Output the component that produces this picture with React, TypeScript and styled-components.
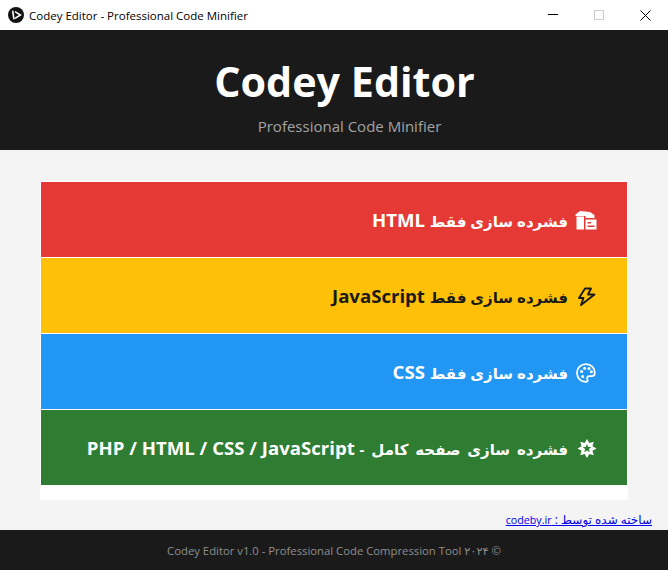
import React, { ReactNode } from 'react'
import styled, { createGlobalStyle } from 'styled-components'

const GlobalStyle = createGlobalStyle`
  html, body {
    margin: 0;
    padding: 0;
    height: 100%;
    overflow: hidden;
    background: #f4f4f4;
  }
  * {
    box-sizing: border-box;
  }
`

const Page = styled.div`
  width: 668px;
  height: 570px;
  display: flex;
  flex-direction: column;
  font-family: 'Open Sans', 'Noto Sans', 'DejaVu Sans', sans-serif;
`
const TitleBar = styled.div`
  height: 30px;
  background: #fff;
  display: flex;
  align-items: center;
  padding-left: 8px;
  font-size: 11.5px;
  color: #000;
`
const TitleText = styled.span`
  margin-left: 5px;
  flex: 1;
`
const WindowButton = styled.div`
  width: 46px;
  height: 30px;
  display: flex;
  align-items: center;
  justify-content: center;
`
const Header = styled.header`
  height: 120px;
  background: #1a1a1a;
  display: flex;
  flex-direction: column;
  align-items: center;
  padding: 24px 0 0 21px;
`
const Heading = styled.h1`
  margin: 0;
  font-size: 41.3px;
  line-height: 54px;
  font-weight: 700;
  color: #fff;
`
const SubHeading = styled.p`
  margin: 8px 0 0 10px;
  font-size: 15px;
  line-height: 20px;
  color: #a3a3a3;
`
const Main = styled.main`
  flex: 1;
  position: relative;
  padding: 31px 40px 0;
`
const Card = styled.div`
  width: 588px;
  height: 319px;
  background: #fff;
  padding: 1px 1px 0;
  display: flex;
  flex-direction: column;
  gap: 1px;
`
const ActionButton = styled.button<{ $bg: string; $fg: string }>`
  height: 75px;
  border: 0;
  padding: 0 30px 0 0;
  background: ${({ $bg }) => $bg};
  color: ${({ $fg }) => $fg};
  font-family: inherit;
  font-size: 18.6px;
  font-weight: 700;
  display: flex;
  align-items: center;
  justify-content: flex-end;
  gap: 7px;
  svg {
    margin-top: 3px;
  }
`
const Persian = styled.span<{ $wordGap: number }>`
  font-size: 15px;
  word-spacing: ${({ $wordGap }) => $wordGap}px;
`
const CreditLink = styled.a`
  position: absolute;
  right: 16px;
  bottom: 2px;
  font-size: 12px;
  line-height: 16px;
  color: #0000ee;
  text-decoration: underline;
`
const CreditDomain = styled.span`
  font-size: 10.7px;
`
const Footer = styled.footer`
  height: 40px;
  background: #1a1a1a;
  display: flex;
  align-items: center;
  justify-content: center;
  font-size: 11.3px;
  color: #8f8f8f;
`

const LogoIcon = () => (
  <svg width="16" height="16" viewBox="0 0 16 16">
    <circle cx="8" cy="8" r="8" fill="#111" />
    <path d="M4.6 3.6 6 12.4" stroke="#fff" strokeWidth="1.6" fill="none" />
    <path d="M7 4.6 12.4 8 7 11.4" stroke="#fff" strokeWidth="1.6" fill="none" />
  </svg>
)

const MinimizeIcon = () => (
  <svg width="10" height="10" viewBox="0 0 10 10">
    <path d="M0 4.5 H10" stroke="#000" />
  </svg>
)
const MaximizeIcon = () => (
  <svg width="10" height="10" viewBox="0 0 10 10">
    <rect x="0.5" y="0.5" width="9" height="9" fill="none" stroke="#ccc" />
  </svg>
)
const CloseIcon = () => (
  <svg width="11" height="11" viewBox="0 0 11 11">
    <path d="M0.5 0.5 10.5 10.5 M10.5 0.5 0.5 10.5" stroke="#000" />
  </svg>
)

const ShirtIcon = () => (
  <svg width="22" height="22" viewBox="5 5 22 22" fill="currentColor">
    <path d="M10 6 L20 7 L24.5 10 V13 L15.5 13 V11 H5.5 V9.5 Z" />
    <path d="M6.5 11.5 H14 V24.5 H6.5 Z" />
    <path fillRule="evenodd" d="M15.5 14.5 H26.5 V24.5 H15.5 Z M17.5 17 V18.5 H21 V17 Z M17.5 20.5 V22 H24.5 V20.5 Z" />
  </svg>
)
const BoltIcon = () => (
  <svg width="22" height="22" viewBox="5 5 22 22" fill="none" stroke="currentColor" strokeWidth="1.9" strokeLinejoin="round">
    <path d="M18.5 7.5 H15 L9 17 H13.5 L11 24 L24.5 13.5 H18 L21 7.5 Z" />
  </svg>
)
const PaletteIcon = () => (
  <svg width="22" height="22" viewBox="5 5 22 22" fill="none" stroke="currentColor" strokeWidth="1.8">
    <path d="M16 7.2 C10.8 7.2 7 11 7 16 C7 21 10.8 24.8 15.8 24.8 C17.6 24.8 18 23.4 17.4 22.4 C16.6 20.8 17.6 19.2 19.2 19.2 H21.8 C23.6 19.2 24.8 18 24.8 16 C24.8 11 21 7.2 16 7.2 Z" />
    <circle cx="11.6" cy="14.6" r="1.5" fill="currentColor" stroke="none" />
    <circle cx="14.6" cy="11.2" r="1.5" fill="currentColor" stroke="none" />
    <circle cx="19" cy="11.4" r="1.5" fill="currentColor" stroke="none" />
    <circle cx="21.4" cy="14.8" r="1.5" fill="currentColor" stroke="none" />
    <circle cx="12.6" cy="19.6" r="1.5" fill="currentColor" stroke="none" />
  </svg>
)
const BurstIcon = () => (
  <svg width="22" height="22" viewBox="5 5 22 22" fill="currentColor">
    <path
      fillRule="evenodd"
      d="M17 6 19.3 10 23.7 8.8 22.5 13.2 26.5 15.5 22.5 17.8 23.7 22.2 19.3 21 17 25 14.7 21 10.3 22.2 11.5 17.8 7.5 15.5 11.5 13.2 10.3 8.8 14.7 10 Z M17 10.9 15.8 13.9 12.6 14.1 15.1 16.1 14.3 19.2 17 17.5 19.7 19.2 18.9 16.1 21.4 14.1 18.2 13.9 Z"
    />
  </svg>
)

interface ActionProps {
  bg: string
  fg: string
  icon: ReactNode
  label: string
  target: string
  wordGap?: number
}

const Action = ({ bg, fg, icon, label, target, wordGap = 0 }: ActionProps) => (
  <ActionButton $bg={bg} $fg={fg}>
    <span dir="rtl">
      <Persian $wordGap={wordGap}>{label}</Persian> {target}
    </span>
    {icon}
  </ActionButton>
)

const App = () => (
  <Page>
    <GlobalStyle />
    <TitleBar>
      <LogoIcon />
      <TitleText>Codey Editor - Professional Code Minifier</TitleText>
      <WindowButton>
        <MinimizeIcon />
      </WindowButton>
      <WindowButton>
        <MaximizeIcon />
      </WindowButton>
      <WindowButton>
        <CloseIcon />
      </WindowButton>
    </TitleBar>
    <Header>
      <Heading>Codey Editor</Heading>
      <SubHeading>Professional Code Minifier</SubHeading>
    </Header>
    <Main>
      <Card>
        <Action bg="#e53935" fg="#fff" icon={<ShirtIcon />} label="فشرده سازی فقط" target="HTML" />
        <Action bg="#ffc107" fg="#1a1a1a" icon={<BoltIcon />} label="فشرده سازی فقط" target="JavaScript" />
        <Action bg="#2196f3" fg="#fff" icon={<PaletteIcon />} label="فشرده سازی فقط" target="CSS" />
        <Action bg="#2e7d32" fg="#fff" icon={<BurstIcon />} label="فشرده سازی صفحه کامل -" target="PHP / HTML / CSS / JavaScript" wordGap={3} />
      </Card>
      <CreditLink href="#" dir="rtl">
        ساخته شده توسط : <CreditDomain>codeby.ir</CreditDomain>
      </CreditLink>
    </Main>
    <Footer>
      <span>Codey Editor v1.0 - Professional Code Compression Tool ۲۰۲۴ ©</span>
    </Footer>
  </Page>
)

export default App
